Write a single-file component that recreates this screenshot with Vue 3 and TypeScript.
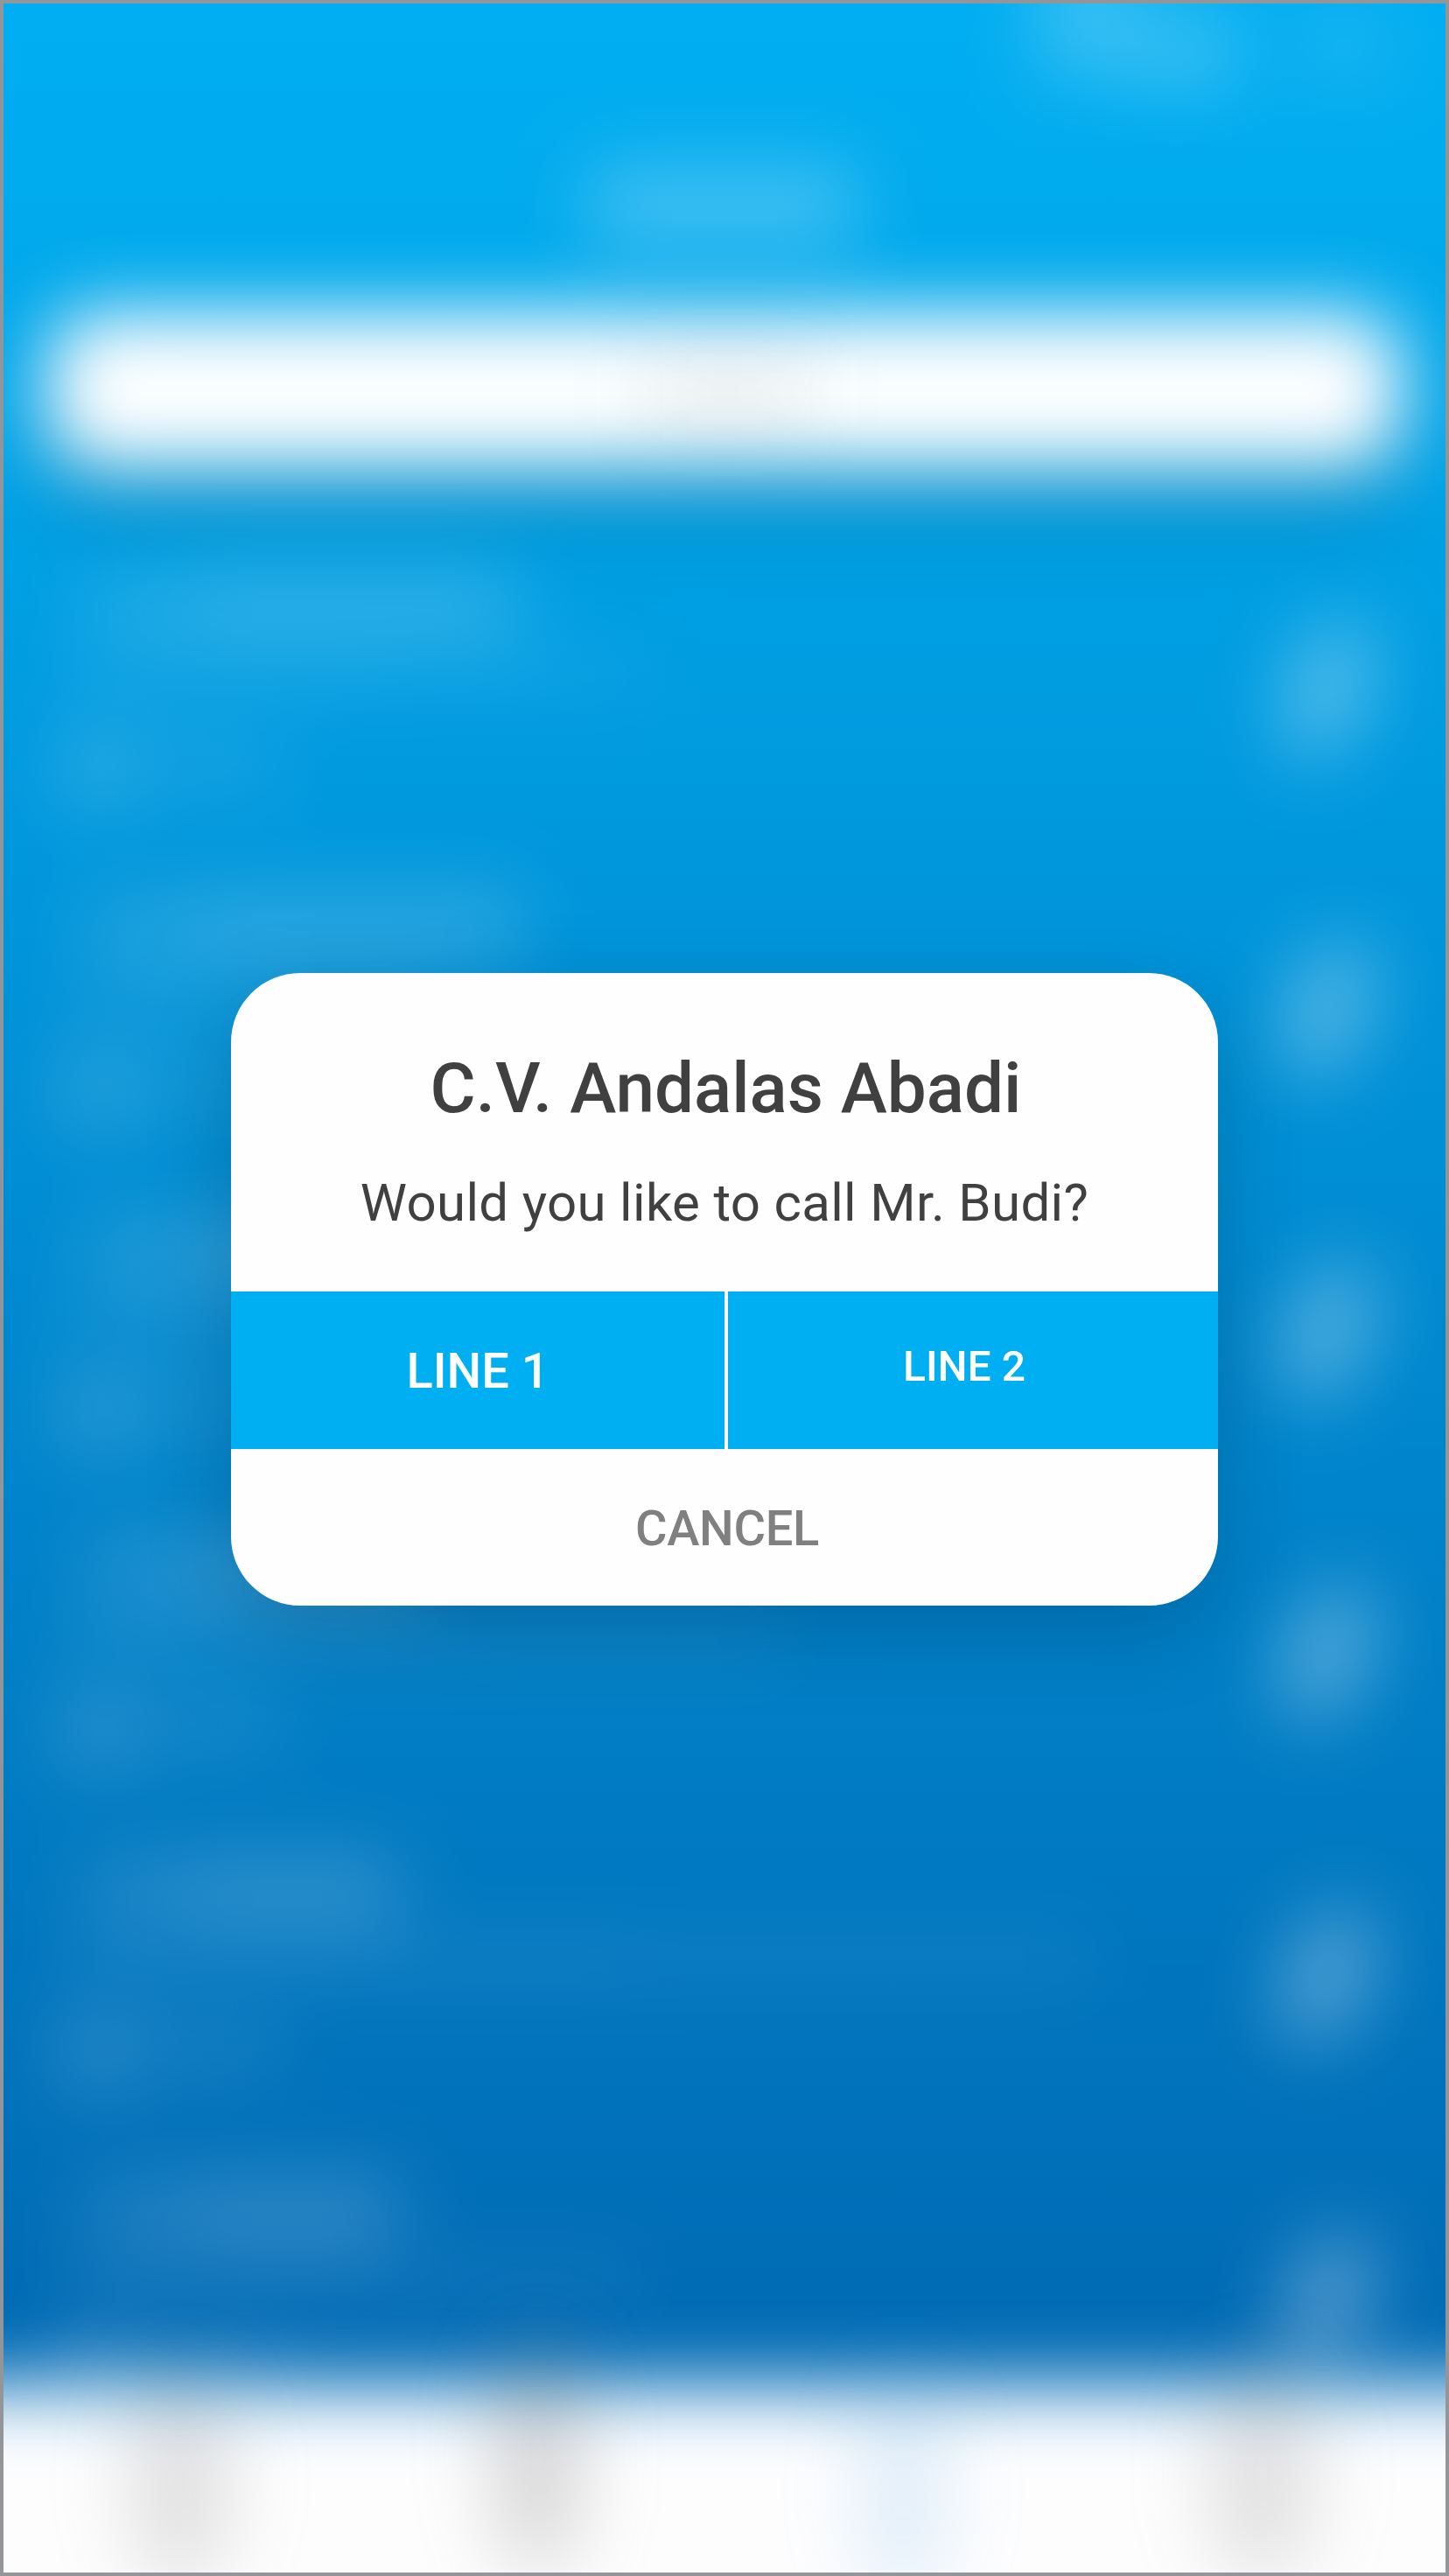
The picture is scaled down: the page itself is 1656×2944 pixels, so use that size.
<script setup lang="ts">
interface Bar {
  x: number
  y: number
  w: number
  h: number
  a: number
}

interface Entry {
  top: number
  icon: number
  title: number
  detail: number
}

const entries: Entry[] = [
  { top: 660, icon: 788, title: 515, detail: 660 },
  { top: 1028, icon: 1154, title: 520, detail: 400 },
  { top: 1396, icon: 1521, title: 420, detail: 500 },
  { top: 1760, icon: 1889, title: 400, detail: 820 },
  { top: 2128, icon: 2258, title: 380, detail: 1170 },
  { top: 2494, icon: 2630, title: 380, detail: 650 },
]

const bars: Bar[] = [
  { x: 1185, y: -60, w: 110, h: 150, a: 0.22 },
  { x: 1295, y: 10, w: 120, h: 95, a: 0.22 },
  { x: 1480, y: 10, w: 110, h: 85, a: 0.11 },
  { x: 672, y: 190, w: 308, h: 90, a: 0.27 },
  ...entries.flatMap((e) => [
    { x: 96, y: e.top - 8, w: 120, h: 80, a: 0.13 },
    { x: 216, y: e.top - 8, w: e.title - 140, h: 80, a: 0.19 },
    { x: 80, y: e.top + 90, w: e.detail * 0.55, h: 44, a: 0.1 },
    { x: 80 + e.detail * 0.55, y: e.top + 90, w: e.detail * 0.45, h: 44, a: 0.08 },
    { x: 70, y: e.top + 175, w: 80, h: 85, a: 0.19 },
    { x: 160, y: e.top + 185, w: 160, h: 60, a: 0.1 },
  ]),
]

const tabs = [
  { x: 206, y: 2835, rx: 58, ry: 125, fill: '#8b8b8b', a: 0.25 },
  { x: 614, y: 2805, rx: 52, ry: 140, fill: '#777777', a: 0.29 },
  { x: 1032, y: 2845, rx: 50, ry: 130, fill: '#5aa6e6', a: 0.18 },
  { x: 1442, y: 2825, rx: 62, ry: 130, fill: '#8b8b8b', a: 0.24 },
]
</script>

<template>
  <main class="screen">
    <svg class="backdrop" viewBox="0 0 1656 2944" aria-hidden="true">
      <defs>
        <linearGradient id="sky" x1="0" y1="0" x2="0" y2="2660" gradientUnits="userSpaceOnUse">
          <stop offset="0" stop-color="#00aef1" />
          <stop offset="0.1" stop-color="#00aaed" />
          <stop offset="1" stop-color="#006bb5" />
        </linearGradient>
        <filter id="soft" x="-300" y="-300" width="2256" height="3700" filterUnits="userSpaceOnUse" color-interpolation-filters="sRGB">
          <feGaussianBlur stdDeviation="43" />
        </filter>
      </defs>
      <rect width="1656" height="2944" fill="url(#sky)" />
      <g filter="url(#soft)">
        <rect x="62" y="420" width="1532" height="190" rx="60" fill="#003a5c" opacity="0.16" />
        <rect
          v-for="(b, i) in bars"
          :key="i"
          :x="b.x"
          :y="b.y"
          :width="b.w"
          :height="b.h"
          fill="#fff"
          :opacity="b.a"
        />
        <ellipse
          v-for="e in entries"
          :key="e.icon"
          cx="1517"
          :cy="e.icon"
          rx="48"
          ry="84"
          fill="#fff"
          opacity="0.33"
          :transform="`rotate(22 1517 ${e.icon})`"
        />
      </g>
      <g filter="url(#soft)">
        <rect x="54" y="357" width="1548" height="178" rx="56" fill="#fff" />
      </g>
      <g filter="url(#soft)">
        <rect x="735" y="405" width="190" height="86" fill="#444" opacity="0.08" />
      </g>
      <g filter="url(#soft)">
        <rect x="-300" y="2728" width="2256" height="600" fill="#fdfdfe" />
      </g>
      <g filter="url(#soft)">
        <ellipse
          v-for="t in tabs"
          :key="t.x"
          :cx="t.x"
          :cy="t.y"
          :rx="t.rx"
          :ry="t.ry"
          :fill="t.fill"
          :opacity="t.a"
        />
      </g>
    </svg>

    <section class="dialog" role="dialog">
      <h1 class="title"><span>C.V. Andalas Abadi</span></h1>
      <p class="message"><span>Would you like to call Mr. Budi?</span></p>
      <div class="lines">
        <button class="line first"><span>LINE 1</span></button>
        <button class="line second"><span>LINE 2</span></button>
      </div>
      <button class="cancel"><span>CANCEL</span></button>
    </section>
  </main>
</template>

<style>
body {
  margin: 0;
}
</style>

<style scoped>
.screen {
  position: relative;
  box-sizing: border-box;
  width: 1656px;
  height: 2944px;
  padding-top: 1112px;
  overflow: hidden;
  font-family: Roboto, 'Liberation Sans', sans-serif;
}
.screen::after {
  content: '';
  position: absolute;
  inset: 0;
  border: 4px solid #939598;
}
.backdrop {
  position: absolute;
  inset: 0;
  width: 1656px;
  height: 2944px;
}
.dialog {
  position: relative;
  display: flex;
  flex-direction: column;
  width: 1128px;
  height: 722.6px;
  margin: 0 auto;
  border-radius: 79px;
  background: #fefefe;
  box-shadow: 0 30px 96px rgba(0, 25, 45, 0.22);
  overflow: hidden;
}
.title,
.message {
  margin: 0;
  color: #404040;
  text-align: center;
  white-space: nowrap;
}
.title {
  padding: 84px 0 0 3px;
  font-size: 80px;
  font-weight: 500;
  line-height: 96px;
}
.message {
  height: 137px;
  padding-top: 47px;
  font-size: 60px;
  font-weight: 400;
  line-height: 72px;
  letter-spacing: 0.32px;
}
.lines {
  display: flex;
  flex: none;
  gap: 4px;
  height: 180px;
}
button {
  box-sizing: border-box;
  margin: 0;
  padding: 0;
  border: 0;
  font-family: inherit;
  font-weight: 500;
  white-space: nowrap;
}
.line {
  background: #00aff2;
  color: #fff;
}
.first {
  width: 564px;
  padding: 2px 0 0 0;
  font-size: 56px;
}
.second {
  width: 560px;
  padding: 0 20px 9px 0;
  font-size: 48px;
}
.cancel {
  flex: 1;
  padding: 3px 0 0 6px;
  background: transparent;
  color: #808080;
  font-size: 56px;
  letter-spacing: -0.3px;
}
</style>
